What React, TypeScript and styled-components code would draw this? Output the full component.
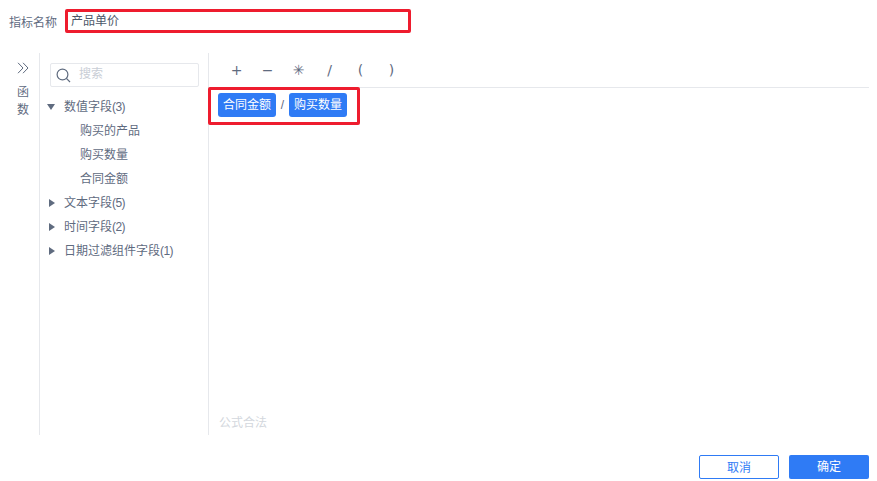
import React from 'react';
import styled, { createGlobalStyle } from 'styled-components';

const operators = ['+', '−', '✳', '/', '(', ')'];

const groups = [
  { name: '数值字段', count: '(3)', open: true, children: ['购买的产品', '购买数量', '合同金额'] },
  { name: '文本字段', count: '(5)', open: false, children: [] },
  { name: '时间字段', count: '(2)', open: false, children: [] },
  { name: '日期过滤组件字段', count: '(1)', open: false, children: [] },
];

const App: React.FC = () => {
  return (
    <Root>
      <GlobalStyle />
      <NameRow>
        <NameLabel>指标名称</NameLabel>
        <NameInput>产品单价</NameInput>
      </NameRow>

      <Body>
        <FnRail>
          <svg width="12" height="12" viewBox="0 0 12 12" fill="none" stroke="#5f6b7f" strokeWidth="1">
            <path d="M1 .8 6 6 1 11.2" />
            <path d="M6 .8 11 6 6 11.2" />
          </svg>
          <FnText>函<br />数</FnText>
        </FnRail>

        <TreePanel>
          <SearchBox>
            <svg width="15" height="15" viewBox="0 0 15 15" fill="none" stroke="#5f6b7f" strokeWidth="1.2">
              <circle cx="6.5" cy="6.5" r="5.4" />
              <path d="M10.4 10.4 14 14" />
            </svg>
            <SearchPlaceholder>搜索</SearchPlaceholder>
          </SearchBox>
          <Tree>
            {groups.map((group) => (
              <React.Fragment key={group.name}>
                <TreeRow>
                  <Caret $open={group.open} />
                  <GroupName>{group.name}<GroupCount>{group.count}</GroupCount></GroupName>
                </TreeRow>
                {group.children.map((child) => (
                  <TreeChild key={child}>{child}</TreeChild>
                ))}
              </React.Fragment>
            ))}
          </Tree>
        </TreePanel>

        <Editor>
          <Toolbar>
            {operators.map((op) => (
              <Operator key={op}>{op}</Operator>
            ))}
          </Toolbar>
          <Formula>
            <Chip>合同金额</Chip>
            <Divide>/</Divide>
            <Chip>购买数量</Chip>
          </Formula>
          <Status>公式合法</Status>
        </Editor>
      </Body>

      <Footer>
        <CancelButton>取消</CancelButton>
        <OkButton>确定</OkButton>
      </Footer>
    </Root>
  );
};

const GlobalStyle = createGlobalStyle`
  html, body {
    margin: 0;
    padding: 0;
    background: #fff;
  }
  body {
    font-family: "Liberation Sans", "Noto Sans CJK SC", sans-serif;
    font-size: 12px;
    color: #5f6b7f;
  }
`;

const Root = styled.div`
  width: 877px;
  height: 481px;
  box-sizing: border-box;
  display: flex;
  flex-direction: column;
  overflow: hidden;
`;

// name row

const NameRow = styled.div`
  display: flex;
  align-items: center;
  height: 24px;
  margin-top: 9px;
  padding-left: 9px;
`;

const NameLabel = styled.span`
  width: 56px;
  font-size: 12px;
  color: #5f6b7f;
`;

const NameInput = styled.div`
  box-sizing: border-box;
  width: 346px;
  height: 24px;
  line-height: 18px;
  padding-left: 3px;
  border: 3px solid #ee1c2e;
  border-radius: 2px;
  font-size: 12px;
  color: #4c5769;
`;

// body

const Body = styled.div`
  display: flex;
  height: 382px;
  margin-top: 20px;
  padding-right: 8px;
`;

const FnRail = styled.div`
  box-sizing: border-box;
  width: 40px;
  padding: 9px 0 0 7px;
  display: flex;
  flex-direction: column;
  align-items: center;
  gap: 9px;
  border-right: 1px solid #e6e8ec;
`;

const FnText = styled.div`
  font-size: 12px;
  line-height: 18px;
  text-align: center;
  color: #5f6b7f;
`;

const TreePanel = styled.div`
  box-sizing: border-box;
  width: 169px;
  padding: 10px 9px 0 10px;
  border-right: 1px solid #e6e8ec;
`;

const SearchBox = styled.div`
  box-sizing: border-box;
  height: 24px;
  padding-left: 5px;
  display: flex;
  align-items: center;
  gap: 8px;
  border: 1px solid #e6e8ec;
  border-radius: 2px;
`;

const SearchPlaceholder = styled.span`
  font-size: 12px;
  line-height: 18px;
  padding-bottom: 3px;
  color: #c9ced6;
`;

const Tree = styled.div`
  margin-top: 8px;
  margin-left: -3px;
`;

const TreeRow = styled.div`
  display: flex;
  align-items: center;
  height: 24px;
`;

const Caret = styled.span<{ $open: boolean }>`
  width: 0;
  height: 0;
  margin-left: ${props => props.$open ? '0' : '2px'};
  border-style: solid;
  border-color: transparent;
  ${props => props.$open
    ? 'border-width: 6px 4px 0 4px; border-top-color: #5f6b7f; margin-right: 9px;'
    : 'border-width: 4px 0 4px 6px; border-left-color: #5f6b7f; margin-right: 9px;'}
`;

const GroupName = styled.span`
  font-size: 12px;
  line-height: 24px;
  color: #5f6b7f;
`;

const GroupCount = styled.span`
  font-size: 12px;
  letter-spacing: -0.6px;
`;

const TreeChild = styled.div`
  height: 24px;
  line-height: 24px;
  padding-left: 33px;
  font-size: 12px;
  color: #5f6b7f;
`;

// editor

const Editor = styled.div`
  flex: 1;
  display: flex;
  flex-direction: column;
`;

const Toolbar = styled.div`
  box-sizing: border-box;
  height: 35px;
  padding: 10px 0 0 12px;
  display: flex;
  border-bottom: 1px solid #e6e8ec;
`;

const Operator = styled.span`
  width: 31px;
  text-align: center;
  font-family: "DejaVu Sans", sans-serif;
  font-size: 14px;
  line-height: 15px;
  color: #5f6b7f;
`;

const Formula = styled.div`
  box-sizing: border-box;
  align-self: flex-start;
  width: 152px;
  height: 38px;
  margin-left: -1px;
  margin-top: -1px;
  padding: 3px 0 0 7px;
  display: flex;
  align-items: flex-start;
  border: 3px solid #ee1c2e;
  border-radius: 2px;
`;

const Chip = styled.span`
  box-sizing: border-box;
  width: 58px;
  height: 24px;
  line-height: 24px;
  text-align: center;
  font-size: 12px;
  color: #fff;
  background: #2f7bf5;
  border-radius: 3px;
`;

const Divide = styled.span`
  width: 13px;
  text-align: center;
  line-height: 24px;
  font-size: 12px;
  color: #5f6b7f;
`;

const Status = styled.div`
  margin-top: auto;
  padding: 0 0 4px 10px;
  font-size: 12px;
  line-height: 16px;
  color: #d3d7dd;
`;

// footer

const Footer = styled.div`
  display: flex;
  justify-content: flex-end;
  gap: 10px;
  margin-top: 20px;
  padding-right: 8px;
`;

const CancelButton = styled.div`
  box-sizing: border-box;
  width: 80px;
  height: 24px;
  line-height: 24px;
  text-align: center;
  font-size: 12px;
  color: #2f7bf5;
  background: #fff;
  border: 1px solid #2f7bf5;
  border-radius: 2px;
`;

const OkButton = styled.div`
  box-sizing: border-box;
  width: 80px;
  height: 24px;
  line-height: 25px;
  text-align: center;
  font-size: 12px;
  color: #fff;
  background: #2f7bf5;
  border-radius: 2px;
`;

export default App;
